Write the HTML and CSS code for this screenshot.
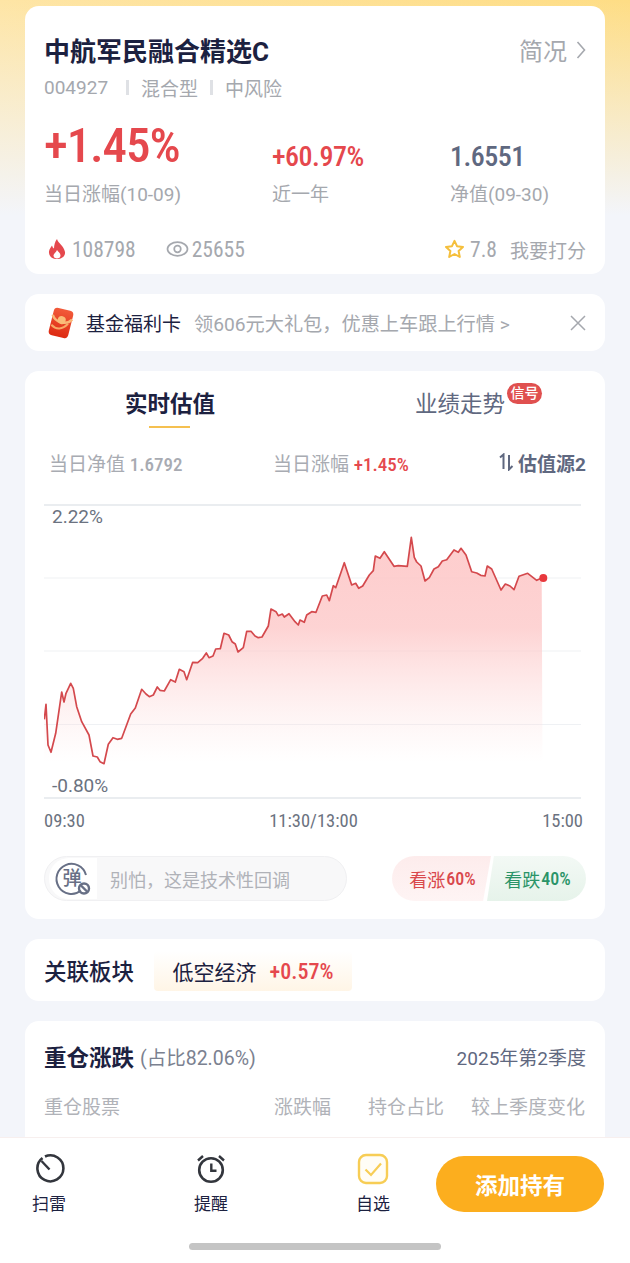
FILE: index.html
```html
<!DOCTYPE html>
<html lang="zh">
    <head>
        <title>中航军民融合精选C</title>
        <meta name="viewport" content="width=device-width, initial-scale=1.0">
        <link rel="stylesheet" href="styles.css">
    </head>
    <body>
        <div id="app">
            <div id="main">
                <!-- fund header -->
                <div class="card head-card">
                    <div class="title-row">
                        <h1 class="fund-name">中航军民融合精选C</h1>
                        <div class="brief">简况
                            <svg width="10" height="20" viewBox="0 0 10 20"><path d="M1.5 2 L8.5 10 L1.5 18" fill="none" stroke="#a5a8ae" stroke-width="1.6"/></svg>
                        </div>
                    </div>
                    <div class="tags">
                        <span class="code">004927</span><i class="sep"></i><span>混合型</span><i class="sep sep-b"></i><span>中风险</span>
                    </div>
                    <div class="figures">
                        <div class="num big up">+1.45%</div>
                        <div class="num mid up">+60.97%</div>
                        <div class="num mid slate">1.6551</div>
                        <div class="cap">当日涨幅(10-09)</div>
                        <div class="cap">近一年</div>
                        <div class="cap">净值(09-30)</div>
                    </div>
                    <div class="meta">
                        <svg class="ic-fire" width="20" height="22" viewBox="0 0 20 22"><path d="M10 1 C11 5 17 8 18 14 C18.500 18 15 21 10 21 C5 21 1.500 18 2 13.500 C2.300 11 4 9 5 7.500 C5.500 9 6 10 7 10.500 C7 7 8 3.500 10 1 Z" fill="#e5484d"/><path d="M10 12 C11 14 13.500 15 13.500 17.500 C13.500 19.500 12 20.500 10 20.500 C8 20.500 6.500 19.500 6.500 17.500 C6.500 15.500 9 14.500 10 12 Z" fill="#fff"/></svg>
                        <span class="meta-num">108798</span>
                        <svg class="ic-eye" width="23" height="16" viewBox="0 0 23 16"><ellipse cx="11.500" cy="8" rx="10" ry="6.800" fill="none" stroke="#a5a8ae" stroke-width="1.700"/><circle cx="11.500" cy="8" r="3.300" fill="none" stroke="#a5a8ae" stroke-width="1.700"/></svg>
                        <span class="meta-num">25655</span>
                        <span class="spacer"></span>
                        <svg width="21" height="20" viewBox="0 0 21 20"><path d="M10.500 1.800 L13 7.200 L19 7.900 L14.600 12 L15.800 18 L10.500 15 L5.200 18 L6.400 12 L2 7.900 L8 7.200 Z" fill="none" stroke="#f5bf3c" stroke-width="2" stroke-linejoin="round"/></svg>
                        <span class="meta-num score">7.8</span>
                        <span class="rate">我要打分</span>
                    </div>
                </div>

                <!-- promo banner -->
                <div class="card promo">
                    <svg width="30" height="32" viewBox="0 0 30 32">
                        <defs><linearGradient id="env" x1="0" y1="0" x2="0" y2="1"><stop offset="0" stop-color="#f25a3a"/><stop offset="1" stop-color="#dd2a12"/></linearGradient></defs>
                        <g transform="rotate(14 15 16)">
                            <rect x="5" y="2" width="20" height="28" rx="4" fill="url(#env)"/>
                            <path d="M5 10 C9 17 21 17 25 10" fill="none" stroke="#f9b676" stroke-width="2.600"/>
                            <path d="M6 20 C12 24 18 22 22 15" fill="none" stroke="#f8a866" stroke-width="2"/>
                            <circle cx="15" cy="13" r="4" fill="#fabc78"/>
                        </g>
                    </svg>
                    <span class="promo-name">基金福利卡</span>
                    <span class="promo-text">领606元大礼包，优惠上车跟上行情 &gt;</span>
                    <span class="spacer"></span>
                    <svg width="16" height="16" viewBox="0 0 16 16"><path d="M1 1 L15 15 M15 1 L1 15" stroke="#a5a8ae" stroke-width="1.500"/></svg>
                </div>

                <!-- estimate chart -->
                <div class="card chart-card">
                    <div class="tabs">
                        <div class="tab active">实时估值</div>
                        <div class="tab">业绩走势<span class="badge">信号</span></div>
                    </div>
                    <div class="stats">
                        <span class="stat-a">当日净值 <b class="num">1.6792</b></span>
                        <span class="stat-b">当日涨幅 <b class="num up">+1.45%</b></span>
                        <span class="stat-c">
                            <svg width="15" height="18" viewBox="0 0 15 18"><path d="M1 4.500 L4.500 1.500 L4.500 16 M10 2 L10 16.500 L13.500 13" fill="none" stroke="#5f6880" stroke-width="2"/></svg>
                            估值源2
                        </span>
                    </div>
                    <div class="chart">
                        <svg width="537" height="296" viewBox="44 504 537 296">
                            <defs>
                                <linearGradient id="area" gradientUnits="userSpaceOnUse" x1="0" y1="570" x2="0" y2="762">
                                    <stop offset="0" stop-color="#fdc6c6" stop-opacity="0.85"/>
                                    <stop offset="0.3" stop-color="#fdc8c8" stop-opacity="0.8"/>
                                    <stop offset="1" stop-color="#fde0e0" stop-opacity="0"/>
                                </linearGradient>
                            </defs>
                            <path d="M44 505 H581 M44 798 H581" stroke="#e4e7ec" stroke-width="1.500"/>
                            <path d="M44 578 H581 M44 651 H581 M44 724.500 H581" stroke="#eff1f4" stroke-width="1.200"/>
                            <polygon fill="url(#area)" points="44.300,719.300 46,704.300 48,745 51,752.300 55.700,733.300 61.700,692 64,702 66,693.300 70.700,683.300 73.300,688.300 76.700,706.700 81.700,721.700 89,735 93,756 97.300,757 100,761.700 104,763.700 108.300,744.300 113,737.700 117.300,739.300 121.700,738.300 130.700,714 135.300,708 141.700,689.300 146,694 149.300,696.700 153.300,695 157.300,687 160,690.300 164.300,691 170.700,679.700 175.300,682 179.300,669.300 184,671.700 186.700,679.700 192.700,662.300 197.700,662.700 202.700,658.300 206.300,653 209,657.700 213,656 215.700,649 220.300,648.700 224,633.300 228.700,635 232,641.700 235.300,644 238,652 243.300,647.700 246.700,631.300 251,631.300 255,636 258.300,637.700 262,637 268.300,626 271,609 276,611.700 278.300,615.700 282.300,614 284.300,617 289,613.700 295,621.700 298.300,625 300,620 304.300,622.300 306.700,615 311.700,611.700 316,612.300 322.300,596 326.700,595 329.300,600.700 333.300,585.700 335.700,587.700 344.300,562.700 351.700,585 355.700,583.300 358.700,588.300 362.700,586 369.300,575 373.300,570.700 375.300,556 380,558.300 384.300,551.700 394,566.300 398.300,565.700 407.300,566.300 411.300,537.300 414.300,557.300 416.700,562 421,566 425,581 429.300,577.700 434,569 438.300,566.700 442.300,561 446.700,559.700 454,550 458.300,552.300 461,548.300 466,555 471.700,571.700 476.700,573 480.700,575.300 485,576 487.300,566 491.700,569 501,590 505.300,584 510,586 514,589.700 519,576.300 527.700,573.300 536.700,580.300 541.700,578 542.500,764 44.300,764"/>
                            <polyline fill="none" stroke="#d4494d" stroke-width="1.700" stroke-linejoin="round" points="44.300,719.300 46,704.300 48,745 51,752.300 55.700,733.300 61.700,692 64,702 66,693.300 70.700,683.300 73.300,688.300 76.700,706.700 81.700,721.700 89,735 93,756 97.300,757 100,761.700 104,763.700 108.300,744.300 113,737.700 117.300,739.300 121.700,738.300 130.700,714 135.300,708 141.700,689.300 146,694 149.300,696.700 153.300,695 157.300,687 160,690.300 164.300,691 170.700,679.700 175.300,682 179.300,669.300 184,671.700 186.700,679.700 192.700,662.300 197.700,662.700 202.700,658.300 206.300,653 209,657.700 213,656 215.700,649 220.300,648.700 224,633.300 228.700,635 232,641.700 235.300,644 238,652 243.300,647.700 246.700,631.300 251,631.300 255,636 258.300,637.700 262,637 268.300,626 271,609 276,611.700 278.300,615.700 282.300,614 284.300,617 289,613.700 295,621.700 298.300,625 300,620 304.300,622.300 306.700,615 311.700,611.700 316,612.300 322.300,596 326.700,595 329.300,600.700 333.300,585.700 335.700,587.700 344.300,562.700 351.700,585 355.700,583.300 358.700,588.300 362.700,586 369.300,575 373.300,570.700 375.300,556 380,558.300 384.300,551.700 394,566.300 398.300,565.700 407.300,566.300 411.300,537.300 414.300,557.300 416.700,562 421,566 425,581 429.300,577.700 434,569 438.300,566.700 442.300,561 446.700,559.700 454,550 458.300,552.300 461,548.300 466,555 471.700,571.700 476.700,573 480.700,575.300 485,576 487.300,566 491.700,569 501,590 505.300,584 510,586 514,589.700 519,576.300 527.700,573.300 536.700,580.300 541.700,578"/>
                            <circle cx="543.300" cy="578" r="4" fill="#e8383d"/>
                        </svg>
                        <span class="y-label y-top">2.22%</span>
                        <span class="y-label y-bottom">-0.80%</span>
                    </div>
                    <div class="axis">
                        <span>09:30</span><span class="axis-mid">11:30/13:00</span><span>15:00</span>
                    </div>
                    <div class="chart-foot">
                        <div class="danmu">
                            <div class="danmu-icon">
                                <svg width="38" height="36" viewBox="0 0 38 36">
                                    <path d="M27 29.500 A15 15 0 1 1 32 14" fill="none" stroke="#687086" stroke-width="2"/>
                                    <text x="18" y="24" text-anchor="middle" class="danmu-char">弹</text>
                                    <circle cx="30" cy="27.500" r="5" fill="none" stroke="#687086" stroke-width="2.400"/>
                                    <path d="M26.500 24 L33.500 31" stroke="#687086" stroke-width="2.400"/>
                                </svg>
                            </div>
                            <span class="danmu-text">别怕，这是技术性回调</span>
                        </div>
                        <div class="vote">
                            <div class="vote-up">看涨<b class="num">60%</b></div>
                            <div class="vote-down">看跌<b class="num">40%</b></div>
                        </div>
                    </div>
                </div>

                <!-- related sector -->
                <div class="card sector">
                    <span class="sector-title">关联板块</span>
                    <div class="chip">低空经济<b class="num up">+0.57%</b></div>
                </div>

                <!-- top holdings, cut by the footer -->
                <div class="card holdings">
                    <div class="hold-head">
                        <span class="hold-title">重仓涨跌</span>
                        <span class="hold-ratio">(占比82.06%)</span>
                        <span class="spacer"></span>
                        <span class="hold-date">2025年第2季度</span>
                    </div>
                    <div class="hold-cols">
                        <span>重仓股票</span>
                        <span class="col-a">涨跌幅</span>
                        <span class="col-b">持仓占比</span>
                        <span class="col-c">较上季度变化</span>
                    </div>
                </div>
            </div>

            <div id="foot">
                <div class="actions">
                    <div class="action act-a">
                        <svg width="32" height="32" viewBox="0 0 32 32"><path d="M9.500 5 A13 13 0 1 0 12 3.500" fill="none" stroke="#33363d" stroke-width="2.600"/><path d="M8.500 8 L16.500 16.500" stroke="#33363d" stroke-width="2.400"/></svg>
                        <span>扫雷</span>
                    </div>
                    <div class="action act-b">
                        <svg width="32" height="32" viewBox="0 0 32 32"><circle cx="16" cy="17" r="11.800" fill="none" stroke="#33363d" stroke-width="2.600"/><path d="M16.300 10.500 V17.800 H21.500" fill="none" stroke="#33363d" stroke-width="2.400"/><path d="M3 7.500 L8 3 M29 7.500 L24 3" stroke="#33363d" stroke-width="2.400"/></svg>
                        <span>提醒</span>
                    </div>
                    <div class="action act-c">
                        <svg width="32" height="32" viewBox="0 0 32 32"><rect x="2" y="2" width="28" height="28" rx="7" fill="#fffdf6" stroke="#f7cd55" stroke-width="2.400"/><path d="M8.500 16.500 L14 22 L24 10.500" fill="none" stroke="#f7cd55" stroke-width="2.200"/></svg>
                        <span>自选</span>
                    </div>
                    <button type="button" class="add-btn">添加持有</button>
                </div>
                <div class="home-bar"></div>
            </div>
        </div>
    </body>
</html>
```

FILE: styles.css
```css
* {
    box-sizing: border-box;
}
html, body {
    margin: 0;
    height: 100%;
}
body {
    font-family: Roboto, "Noto Sans CJK SC", sans-serif;
    color: #1c2140;
    background: #f3f5fa;
}
h1 {
    margin: 0;
}
#app {
    display: flex;
    flex-direction: column;
    height: 1263px;
    overflow: hidden;
}
#main {
    flex: 1;
    min-height: 0;
    overflow: hidden;
    padding: 6px 25px 0;
    background:
        linear-gradient(rgba(243, 245, 250, 0), #f3f5fa 215px),
        linear-gradient(to right, #fee5a5, #fedd85);
}
.card {
    background: #fff;
    border-radius: 14px;
    margin-bottom: 20px;
}
.spacer {
    flex: 1;
}
.num {
    font-family: Roboto, sans-serif;
    font-stretch: 75%;
}
.up {
    color: #e5484d;
}
.slate {
    color: #5f6880;
}

/* fund header */
.head-card {
    height: 268px;
    padding: 29px 19px 0 19px;
}
.title-row {
    display: flex;
    align-items: center;
    justify-content: space-between;
    height: 34px;
}
.fund-name {
    font-size: 26px;
    font-weight: 700;
    line-height: 34px;
}
.brief {
    display: flex;
    align-items: center;
    gap: 9px;
    margin-top: -5px;
    font-size: 24px;
    color: #a5a8ae;
}
.tags {
    display: flex;
    align-items: center;
    height: 26px;
    margin-top: 5px;
    font-size: 19px;
    color: #a5a8ae;
}
.code {
    width: 82px;
}
.sep {
    width: 3px;
    height: 15px;
    margin-right: 12px;
    background: #dfe1e5;
}
.sep-b {
    margin-left: 12px;
    margin-right: 12px;
}
.figures {
    display: grid;
    grid-template-columns: 228px 178px auto;
    align-items: end;
    margin-top: 17px;
}
.big {
    font-size: 49px;
    font-weight: 500;
    line-height: 58px;
    letter-spacing: -1.100px;
}
.mid {
    font-size: 28px;
    font-weight: 500;
    line-height: 36px;
    letter-spacing: -0.500px;
}
.cap {
    margin-top: 6px;
    font-size: 19px;
    line-height: 28px;
    color: #a5a8ae;
}
.meta {
    display: flex;
    align-items: center;
    height: 28px;
    margin-top: 26px;
    font-size: 20px;
    color: #a5a8ae;
}
.ic-fire {
    margin: 0 5px 0 3px;
}
.ic-eye {
    margin: 0 3px 0 30px;
}
.meta-num {
    font-size: 21.500px;
    font-stretch: 75%;
}
.score {
    margin-left: 5px;
}
.rate {
    margin-left: 13px;
    font-size: 19px;
}

/* promo banner */
.promo {
    display: flex;
    align-items: center;
    height: 57px;
    padding: 0 19px 0 21px;
}
.promo-name {
    margin-left: 10px;
    font-size: 19px;
}
.promo-text {
    margin-left: 13px;
    font-size: 19.200px;
    color: #a5a8ae;
}

/* estimate chart */
.chart-card {
    height: 548px;
    padding: 0 19px;
}
.tabs {
    display: flex;
    height: 58px;
}
.tab {
    position: relative;
    flex: none;
    padding-top: 17px;
    font-size: 22.500px;
    line-height: 32px;
    color: #5f6880;
}
.tab:first-child {
    margin-left: 81px;
    margin-right: 200px;
}
.active {
    font-weight: 700;
    color: #1c2140;
}
.active::after {
    content: "";
    position: absolute;
    left: 24px;
    top: 55px;
    width: 41px;
    height: 2px;
    background: #f5c050;
}
.badge {
    position: absolute;
    left: 92px;
    top: 12px;
    width: 35px;
    height: 21px;
    border-radius: 11px;
    background: #e0504f;
    color: #fff;
    font-size: 14px;
    font-weight: 500;
    line-height: 20px;
    text-align: center;
}
.stats {
    display: flex;
    align-items: center;
    height: 28px;
    margin-top: 19px;
    font-size: 19px;
    color: #a8abb2;
}
.stats b {
    font-weight: 500;
}
.stat-a {
    width: 229px;
    padding-left: 5px;
}
.stat-b {
    flex: 1;
}
.stat-c {
    display: flex;
    align-items: center;
    gap: 4px;
    font-weight: 700;
    color: #5f6880;
}
.chart {
    position: relative;
    height: 296px;
    margin-top: 28px;
}
.chart svg {
    display: block;
}
.y-label {
    position: absolute;
    left: 8px;
    font-size: 19px;
    line-height: 22px;
    color: #6b7280;
}
.y-top {
    top: 2px;
}
.y-bottom {
    top: 271px;
}
.axis {
    display: flex;
    justify-content: space-between;
    padding-right: 3px;
    margin-top: 9px;
    font-size: 18.500px;
    line-height: 24px;
    font-stretch: 75%;
    color: #6b7280;
}
.chart-foot {
    display: flex;
    justify-content: space-between;
    margin-top: 23px;
}
.danmu {
    display: flex;
    align-items: center;
    width: 303px;
    height: 45px;
    padding-left: 4px;
    border: 1px solid #f0f0f2;
    border-radius: 23px;
    background: #f8f8f9;
}
.danmu-icon {
    display: flex;
    align-items: center;
    justify-content: center;
    width: 48px;
    height: 41px;
    border-radius: 20px 0 0 20px;
    background: #fff;
}
.danmu-char {
    font-size: 19px;
    font-weight: 500;
    fill: #687086;
}
.danmu-text {
    margin-left: 13px;
    font-size: 18px;
    color: #b0b2b8;
}
.vote {
    display: flex;
    font-size: 18px;
}
.vote b {
    margin-left: 1px;
    font-weight: 500;
}
.vote-up, .vote-down {
    display: flex;
    align-items: center;
    justify-content: center;
    width: 99px;
    height: 45px;
}
.vote-up {
    padding-left: 2px;
    border-radius: 23px 0 0 23px;
    background: linear-gradient(#fdecec, #fef4f4);
    color: #d9484c;
    clip-path: polygon(0 0, 100% 0, 92% 100%, 0 100%);
}
.vote-down {
    margin-left: -4px;
    padding-left: 2px;
    border-radius: 0 23px 23px 0;
    background: linear-gradient(#f3f9f5, #e6f3ea);
    color: #2a9468;
    clip-path: polygon(7% 0, 100% 0, 100% 100%, 0 100%);
}

/* related sector */
.sector {
    display: flex;
    align-items: center;
    height: 62px;
    padding-left: 19px;
}
.sector-title {
    font-size: 22.500px;
    font-weight: 500;
}
.chip {
    display: flex;
    align-items: center;
    justify-content: center;
    gap: 13px;
    width: 198px;
    height: 40px;
    margin-left: 20px;
    margin-top: 2px;
    border-radius: 4px;
    background: linear-gradient(#fff, #fff5e6);
    font-size: 21px;
}
.chip b {
    font-size: 22px;
    font-weight: 500;
}

/* top holdings */
.holdings {
    height: 200px;
    padding: 19px 19px 0;
}
.hold-head {
    display: flex;
    align-items: center;
    height: 32px;
}
.hold-title {
    font-size: 22.500px;
    font-weight: 700;
}
.hold-ratio {
    margin-left: 6px;
    font-size: 19.500px;
    color: #7b8190;
}
.hold-date {
    font-size: 19px;
    color: #5f6880;
}
.hold-cols {
    display: flex;
    align-items: center;
    height: 28px;
    margin-top: 19px;
    font-size: 19px;
    color: #b0b2b8;
}
.col-a {
    margin-left: 154px;
}
.col-b {
    margin-left: 37px;
}
.col-c {
    margin-left: 27px;
}

/* bottom action bar */
#foot {
    flex: none;
    height: 126px;
    border-top: 1px solid #f7efee;
    background: #fff;
}
.actions {
    display: flex;
    height: 105px;
    position: relative;
}
.action {
    display: flex;
    flex-direction: column;
    align-items: center;
    flex: none;
    width: 40px;
    padding-top: 15px;
    font-size: 17px;
    line-height: 24px;
    color: #1c2140;
}
.action svg {
    display: block;
    margin-bottom: 7px;
}
.act-a {
    margin-left: 29px;
}
.act-b {
    margin-left: 122px;
}
.act-c {
    margin-left: 122px;
}
.add-btn {
    width: 168px;
    height: 56px;
    margin: 18px 0 0 43px;
    border: 0;
    border-radius: 28px;
    background: #fcae1e;
    color: #fff;
    font-family: inherit;
    font-size: 22.500px;
    font-weight: 700;
}
.home-bar {
    width: 252px;
    height: 7px;
    margin: 0 auto;
    border-radius: 4px;
    background: #c4c4c4;
}
```
